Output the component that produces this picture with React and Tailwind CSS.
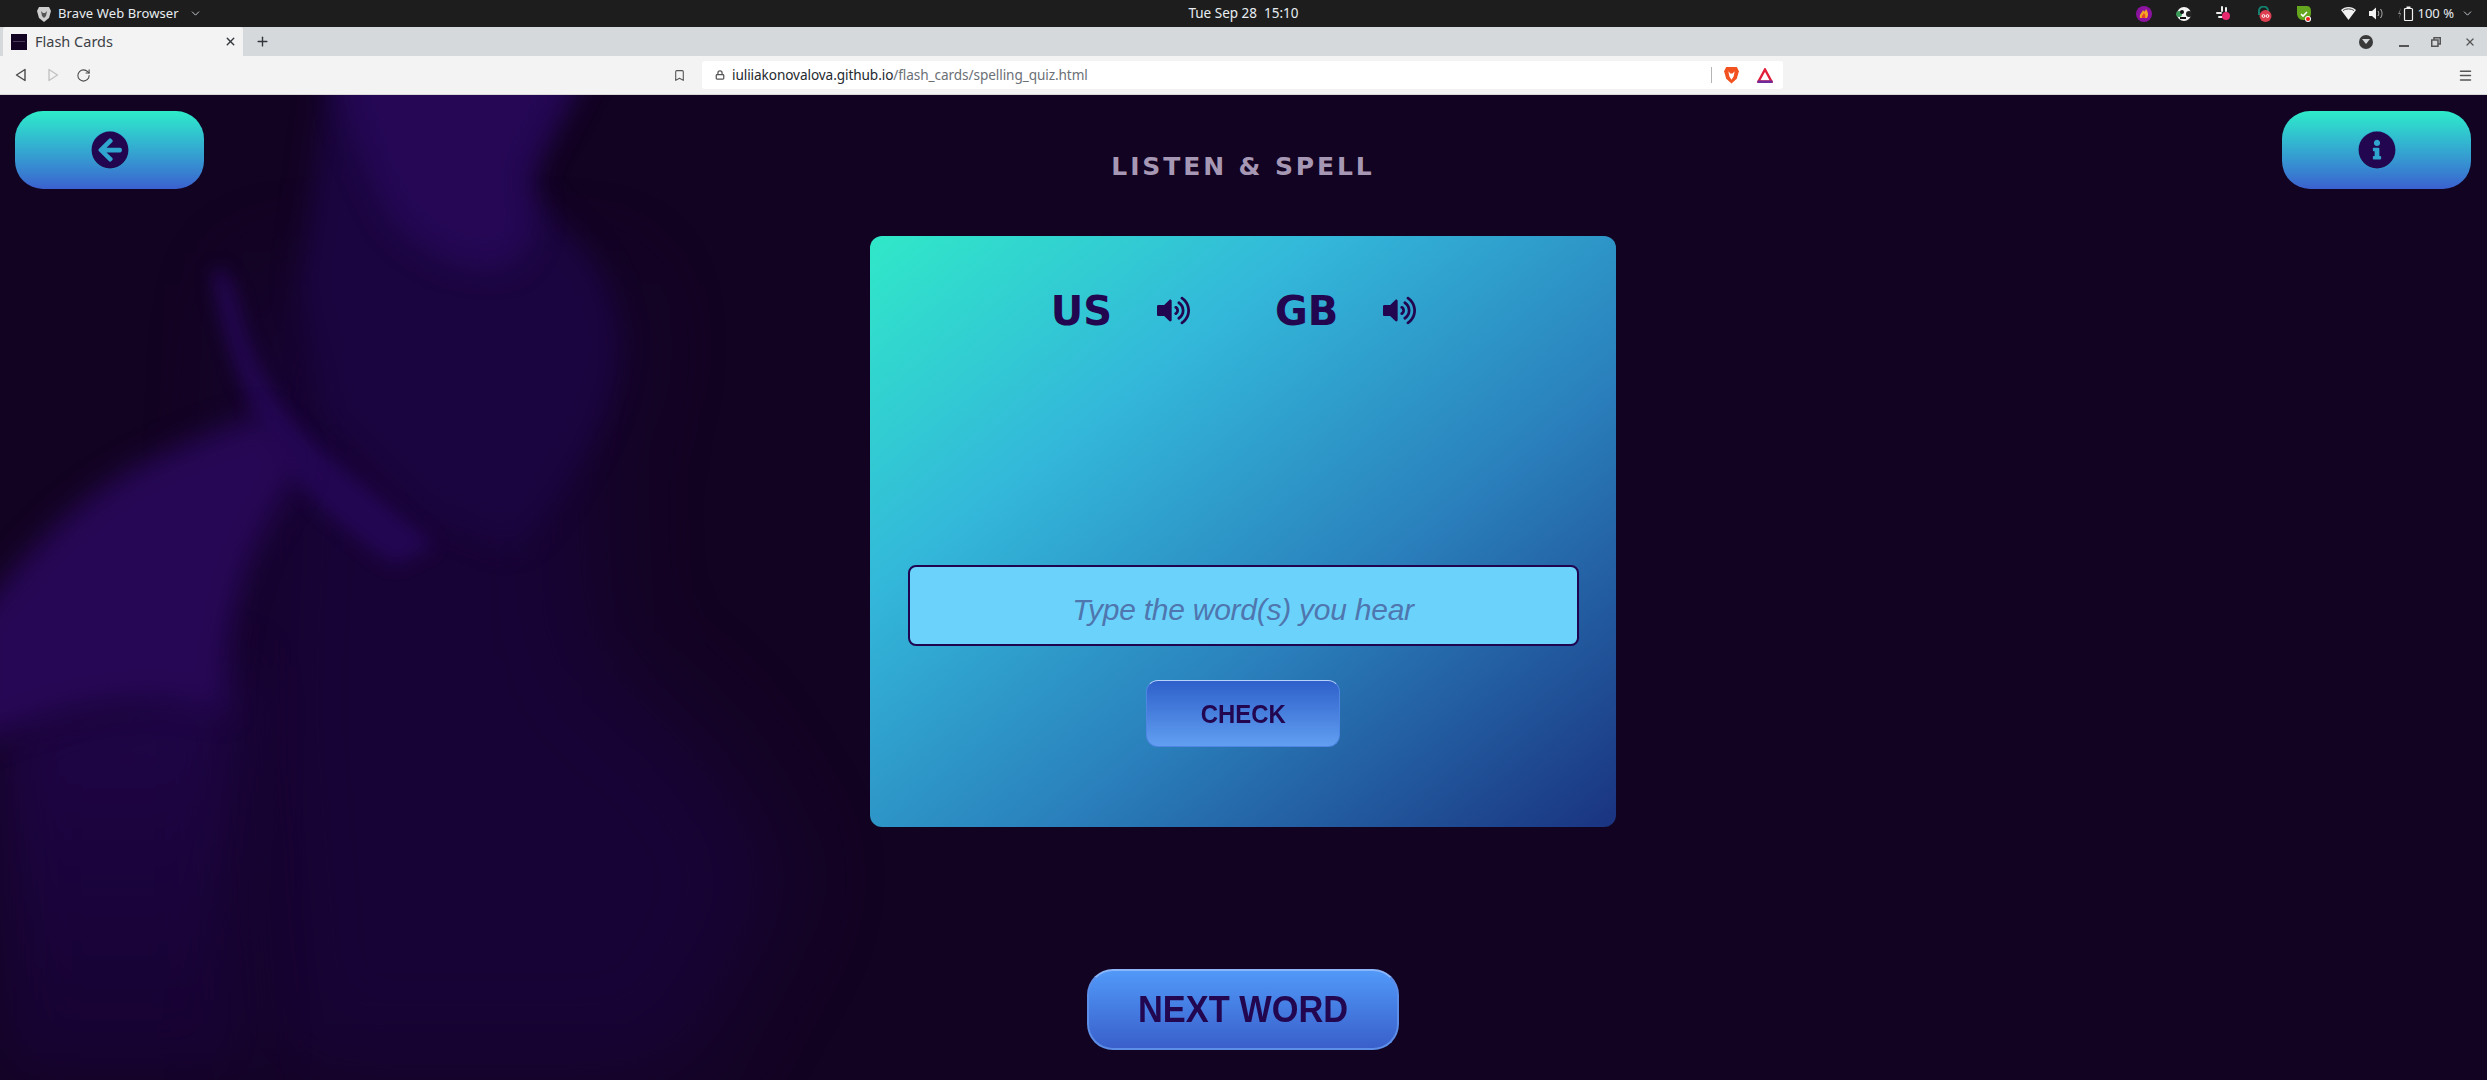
import React from "react";
import { FaArrowCircleLeft, FaInfoCircle, FaVolumeUp } from "react-icons/fa";
import { ChevronDown, X, Plus, RotateCw, Lock, Bookmark, Menu } from "lucide-react";

const dejavu = "font-['DejaVu_Sans',sans-serif]";
const liberation = "font-['Liberation_Sans',Arial,sans-serif]";
const ui = "font-['Noto_Sans','Open_Sans',sans-serif]";

function Smoke() {
  const region = { filterUnits: "userSpaceOnUse", x: -300, y: -300, width: 1600, height: 1600, colorInterpolationFilters: "sRGB" };
  return (
    <svg className="absolute inset-0 w-full h-full" viewBox="0 0 2487 985" preserveAspectRatio="none" aria-hidden="true">
      <defs>
        <filter id="s60" {...region}><feGaussianBlur stdDeviation="50" /></filter>
        <filter id="s30" {...region}><feGaussianBlur stdDeviation="30" /></filter>
        <filter id="s16" {...region}><feGaussianBlur stdDeviation="14" /></filter>
        <filter id="s8" {...region}><feGaussianBlur stdDeviation="9" /></filter>
        <linearGradient id="lowerFade" x1="0" y1="0" x2="0" y2="1">
          <stop offset="0" stopColor="#220650" />
          <stop offset="1" stopColor="#170333" />
        </linearGradient>
      </defs>
      <path d="M260 190 L610 190 L625 260 L590 360 L600 560 L700 640 L790 780 L680 985 L270 985 L240 620 Z" fill="#19043a" opacity="0.85" filter="url(#s60)" />
      <path d="M0 620 L240 570 L235 800 L250 985 L0 985 Z" fill="url(#lowerFade)" opacity="0.85" filter="url(#s30)" />
      <path d="M330 -40 L595 -40 C560 30 530 70 527 95 C560 130 600 160 612 210 C625 260 610 310 585 355 C560 400 540 430 510 450 L430 420 L330 320 L300 190 Z" fill="#1b0540" filter="url(#s16)" />
      <path d="M335 -40 L585 -40 C555 30 530 60 527 92 C540 120 540 140 510 170 C470 180 420 160 390 120 C370 80 345 30 335 -40 Z" fill="#250755" filter="url(#s16)" />
      <path d="M212 175 C225 170 232 180 240 215 C250 260 270 300 305 340 C350 380 400 420 435 450 L395 470 C350 440 300 400 270 350 C245 300 220 240 212 175 Z" fill="#250758" opacity="0.85" filter="url(#s8)" />
      <path d="M-30 530 C30 450 70 410 135 372 C190 345 230 330 262 322 C285 340 300 360 300 375 C270 420 250 460 240 500 C230 540 225 570 225 620 C150 590 70 610 -30 650 Z" fill="#260755" filter="url(#s16)" />
    </svg>
  );
}

function TopBar() {
  return (
    <div className={`h-[27px] bg-[#1d1d1d] text-[#e8edf2] grid grid-cols-[1fr_auto_1fr] items-center ${ui}`}>
      <div className="flex items-center pl-[37px]">
        <svg width="14" height="16" viewBox="0 0 14 16" className="mr-[7px]">
          <path d="M2 1 L12 1 L14 5 L12 12 L7 16 L2 12 L0 5 Z" fill="#cfcfcf" />
          <path d="M4 5 L6 7 L8 7 L10 5 L9 10 L7 12 L5 10 Z" fill="#555" />
        </svg>
        <span className="text-[13px] tracking-[0.1px] leading-none">Brave Web Browser</span>
        <ChevronDown size={13} className="ml-[10px]" strokeWidth={1.5} />
      </div>
      <div className="text-[13.5px] leading-none whitespace-pre">Tue Sep 28  15:10</div>
      <div className="flex items-center justify-end pr-[13px]">
        <svg width="16" height="16" viewBox="0 0 16 16" className="mr-[24px]">
          <circle cx="8" cy="8" r="8" fill="#8c12a0" />
          <path d="M4 12 C3 8 6 7 7 4 C8 6 9 6 10 3 C12 6 13 9 11 12 Z" fill="#f5a623" />
          <path d="M6 12 C5 10 7 9 8 7 C9 9 10 10 9 12 Z" fill="#e8452c" />
        </svg>
        <svg width="16" height="16" viewBox="0 0 16 16" className="mr-[24px]">
          <circle cx="8" cy="8" r="7" fill="#f4f4f4" />
          <circle cx="3" cy="8" r="3" fill="#3c9a5a" />
          <circle cx="13" cy="8" r="3" fill="#222" />
          <circle cx="6" cy="6" r="2" fill="#111" />
          <rect x="4" y="11" width="6" height="2" fill="#111" />
        </svg>
        <svg width="16" height="16" viewBox="0 0 16 16" className="mr-[24px]">
          <rect x="5" y="0" width="2" height="6" rx="1" fill="#eee" />
          <rect x="0" y="6" width="6" height="2" rx="1" fill="#eee" />
          <rect x="9" y="1" width="2" height="5" rx="1" fill="#eee" />
          <rect x="2" y="10" width="5" height="2" rx="1" fill="#eee" />
          <circle cx="10" cy="10" r="4" fill="#ea2a70" />
        </svg>
        <svg width="16" height="16" viewBox="0 0 16 16" className="mr-[24px]">
          <path d="M3 9 V5 a4.5 4.5 0 0 1 9 0 V6" stroke="#14806e" strokeWidth="2" fill="none" />
          <circle cx="9.5" cy="10" r="6" fill="#dd3f50" />
          <circle cx="7.5" cy="10" r="1.4" stroke="#fff" fill="none" />
          <circle cx="11.5" cy="10" r="1.4" stroke="#fff" fill="none" />
        </svg>
        <svg width="16" height="16" viewBox="0 0 16 16" className="mr-[29px]">
          <path d="M1 0 H11 C15 0 15 4 15 7 C15 12 11 14 7 14 C3 14 1 11 1 7 Z" fill="#64a61e" />
          <path d="M5 8 L7 10 L11 6" stroke="#fff" strokeWidth="1.6" fill="none" />
          <circle cx="12" cy="13" r="3" fill="#fff" />
          <circle cx="12" cy="13" r="2" fill="#e8201c" />
        </svg>
        <svg width="15" height="13" viewBox="0 0 15 13" className="mr-[13px]">
          <path d="M0 3 C4 -1 11 -1 15 3 L7.5 13 Z" fill="#f2f2f2" />
          <path d="M2 3.6 C5 1.4 10 1.4 13 3.6" stroke="#1d1d1d" strokeWidth="0.8" fill="none" />
        </svg>
        <svg width="15" height="13" viewBox="0 0 15 13" className="mr-[14px]">
          <path d="M0 4 H3 L7 0.5 V12.5 L3 9 H0 Z" fill="#f2f2f2" />
          <path d="M9 4 C10 5.5 10 7.5 9 9 M11.5 2 C13.5 5 13.5 8 11.5 11" stroke="#bbb" strokeWidth="1" fill="none" />
        </svg>
        <svg width="16" height="15" viewBox="0 0 16 15" className="mr-[4px]">
          <path d="M3 2 L0 8 H2 L1 13 L3 7 H1.5 Z" fill="#8a8a8a" />
          <rect x="6.5" y="2.5" width="8" height="12" rx="1" stroke="#f2f2f2" strokeWidth="1.2" fill="none" />
          <rect x="8.5" y="0.5" width="4" height="2" fill="#f2f2f2" />
        </svg>
        <span className="text-[13px] leading-none whitespace-pre">100 %</span>
        <ChevronDown size={13} className="ml-[7px]" strokeWidth={1.5} />
      </div>
    </div>
  );
}

function TabStrip() {
  return (
    <div className={`h-[29px] bg-[#d5d9dc] flex items-center ${ui}`}>
      <div className="ml-[3px] w-[240px] h-full bg-[#f3f3f3] rounded-t-[3px] flex items-center pl-[8px] pr-[6px]">
        <div className="w-[16px] h-[16px] bg-[#130322] flex items-center justify-center">
          <div className="w-[12px] h-px bg-[#4a3a5a]" />
        </div>
        <span className="ml-[8px] text-[14.5px] text-[#3d4146] leading-none">Flash Cards</span>
        <X size={13} strokeWidth={2.6} className="ml-auto text-[#33373b]" />
      </div>
      <Plus size={15} strokeWidth={2.2} className="ml-[12px] text-[#33373b]" />
      <div className="ml-auto flex items-center pr-[11px] text-[#404449]">
        <div className="w-[14px] h-[14px] rounded-full bg-[#3a3a3a] flex items-center justify-center mr-[26px]">
          <div className="w-0 h-0 border-l-[4px] border-r-[4px] border-t-[5px] border-l-transparent border-r-transparent border-t-[#d5d9dc]" />
        </div>
        <div className="w-[10px] h-[2px] bg-[#555] mt-[9px] mr-[22px]" />
        <svg width="10" height="10" viewBox="0 0 10 10" className="mr-[23px]">
          <path d="M0.75 3 H7 V9.25 H0.75 Z M3 3 V0.75 H9.25 V7 H7" stroke="#555" strokeWidth="1.5" fill="none" />
        </svg>
        <X size={12} strokeWidth={2.6} className="text-[#555]" />
      </div>
    </div>
  );
}

function Toolbar() {
  return (
    <div className={`h-[39px] bg-[#f3f3f3] border-b border-[#d8d8d8] flex items-center ${ui}`}>
      <svg width="12" height="14" viewBox="0 0 12 14" className="ml-[15px]">
        <path d="M10 1.5 V12.5 L1.5 7 Z" stroke="#4a4a4a" strokeWidth="1.4" fill="none" strokeLinejoin="round" />
      </svg>
      <svg width="12" height="14" viewBox="0 0 12 14" className="ml-[20px]">
        <path d="M2 1.5 V12.5 L10.5 7 Z" stroke="#c2c2c2" strokeWidth="1.4" fill="none" strokeLinejoin="round" />
      </svg>
      <RotateCw size={15} strokeWidth={1.7} className="ml-[17px] text-[#4a4a4a]" />
      <Bookmark size={13} strokeWidth={2} className="ml-[582px] text-[#555]" />
      <div className="ml-[16px] w-[1081px] h-[28px] bg-white rounded-[3px] flex items-center pl-[13px] pr-[10px]">
        <Lock size={10} strokeWidth={3} className="text-[#555]" />
        <span className="ml-[7px] text-[13.6px] leading-none tracking-[-0.08px] text-[#24292e]">
          iuliiakonovalova.github.io<span className="text-[#6b7076]">/flash_cards/spelling_quiz.html</span>
        </span>
        <div className="ml-auto w-px h-[16px] bg-[#b5b5b5]" />
        <svg width="15" height="18" viewBox="0 0 14 17" className="ml-[12px]">
          <path d="M2 1 L12 1 L14 5 L12 12 L7 16.5 L2 12 L0 5 Z" fill="#f1521f" />
          <path d="M4 5 L6 7 L8 7 L10 5 L9 10 L7 13 L5 10 Z" fill="#fff" />
        </svg>
        <svg width="16" height="15" viewBox="0 0 16 15" className="ml-[18px]">
          <path d="M8 1.5 L14.5 13.5 H1.5 Z" fill="none" stroke="#e3203c" strokeWidth="2.4" />
          <path d="M0.5 12.5 H15.5 V15 H0.5 Z" fill="#6c2a9e" />
        </svg>
      </div>
      <Menu size={15} strokeWidth={2.4} className="ml-auto mr-[14px] text-[#555]" />
    </div>
  );
}

function Speaker() {
  return <FaVolumeUp className="text-[#22064f] w-[33px] h-[33px]" />;
}

export default function App() {
  return (
    <div className="w-[2487px] h-[1080px] overflow-hidden flex flex-col bg-[#130322]">
      <TopBar />
      <TabStrip />
      <Toolbar />
      <main className="relative flex-1 bg-[#130322]">
        <Smoke />
        <div className="relative flex flex-col items-center h-full">
          <div className="w-full pl-[15px] pr-[16px] pt-[16px] flex justify-between items-start">
            <button className="w-[189px] h-[78px] rounded-[28px] bg-gradient-to-b from-[#2eecc9] to-[#3b60cf] flex items-center justify-center">
              <span className="relative w-[38px] h-[38px] rounded-full bg-[#2fa5cf] flex items-center justify-center">
                <FaArrowCircleLeft className="w-[38px] h-[38px] text-[#22064f]" />
              </span>
            </button>
            <h1 className={`mt-[44px] text-[25px] leading-[24px] font-bold tracking-[2.9px] text-[#a698b4] ${dejavu}`}>LISTEN &amp; SPELL</h1>
            <button className="w-[189px] h-[78px] rounded-[28px] bg-gradient-to-b from-[#2eecc9] to-[#3b60cf] flex items-center justify-center">
              <span className="relative w-[38px] h-[38px] rounded-full bg-[#2fa5cf] flex items-center justify-center">
                <FaInfoCircle className="w-[38px] h-[38px] text-[#22064f]" />
              </span>
            </button>
          </div>

          <section className="mt-[47px] mr-[1px] w-[746px] h-[591px] rounded-[12px] bg-[linear-gradient(to_bottom_right,#30e8c8_0%,#33b8da_30%,#2a80bc_62%,#1a3380_100%)] flex flex-col items-center">
            <div className={`mt-[52px] pr-[19px] flex items-center text-[#22064f] font-bold text-[40px] leading-[46px] ${dejavu}`}>
              <span>US</span>
              <span className="ml-[45px] mr-[85px] -mt-[1px]"><Speaker /></span>
              <span>GB</span>
              <span className="ml-[45px] -mt-[1px]"><Speaker /></span>
            </div>
            <input
              readOnly
              placeholder="Type the word(s) you hear"
              className={`mt-[231px] w-[671px] h-[81px] pt-[8px] rounded-[8px] border-2 border-[#1f0550] bg-[#6bd3fb] text-center italic text-[30px] tracking-[-0.25px] placeholder:text-[#4f76ae] ${liberation}`}
            />
            <button className={`mt-[34px] w-[194px] h-[67px] rounded-[12px] border border-[#4f86e4] border-t-[#b9d2fb] bg-gradient-to-b from-[#2f60ca] to-[#629ff1] text-[#22064f] font-bold text-[26px] leading-none ${liberation}`}>
              <span className="inline-block scale-x-[0.92]">CHECK</span>
            </button>
          </section>

          <button className={`mt-[142px] mr-[1px] w-[312px] h-[81px] rounded-[26px] border-[2px] border-[#5d8fe8] border-t-[#8cb6fa] bg-gradient-to-b from-[#5199f8] to-[#3a5fcb] text-[#22064f] font-bold text-[36px] leading-none ${liberation}`}>
            <span className="inline-block scale-x-[0.955]">NEXT WORD</span>
          </button>
        </div>
      </main>
    </div>
  );
}
